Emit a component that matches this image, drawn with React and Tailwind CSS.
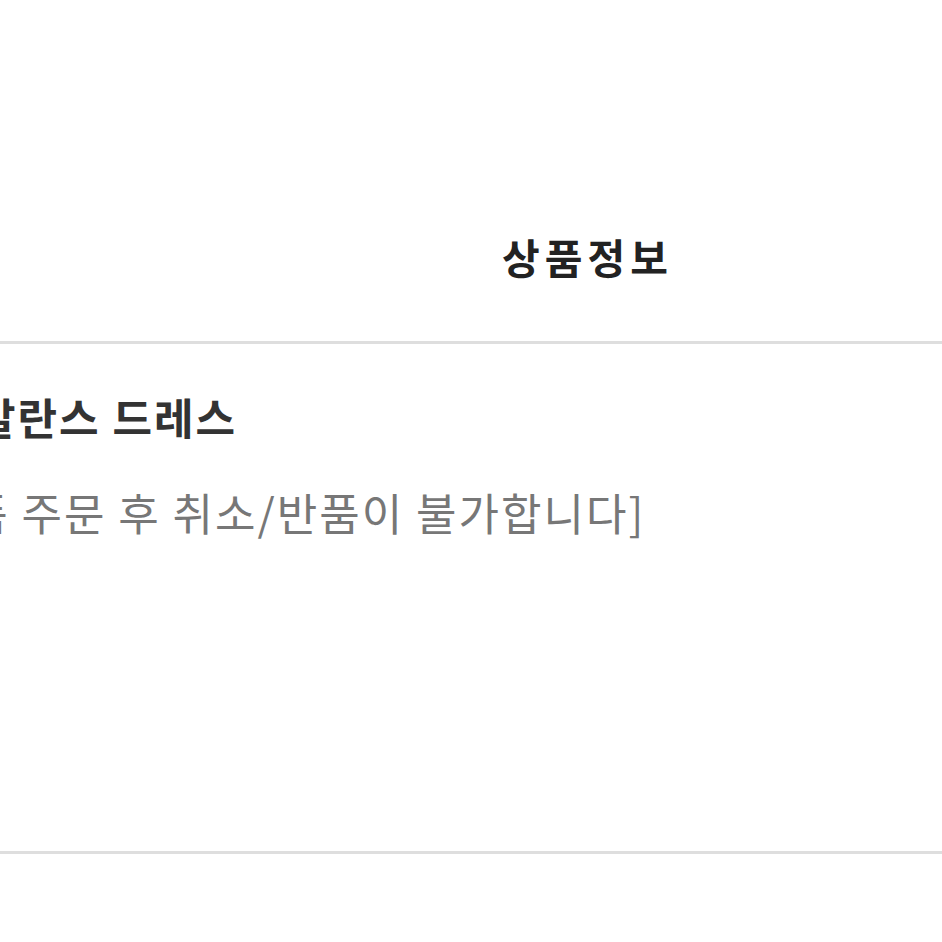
import React from 'react';

export default function App() {
    return (
        <div className="w-[942px] h-[942px] bg-white overflow-hidden" style={{ fontFamily: '"Noto Sans CJK KR", "Noto Sans", sans-serif' }}>
            <div className="h-[341px] flex items-start pt-[236px] pl-[502px]">
                <h2 className="text-[41px] leading-none font-bold text-[#222] tracking-[5px]">상품정보</h2>
            </div>
            <div className="h-[3px] bg-[#dedede]" />
            <div className="h-[507px] overflow-hidden pt-[51px]">
                <p className="text-[43px] leading-none font-bold text-[#333] tracking-[2px] whitespace-nowrap -ml-[24px]">
                    발란스 드레스
                </p>
                <p className="mt-[52px] text-[44px] leading-none text-[#777] tracking-[2px] whitespace-nowrap -ml-[274px]">
                    [해외배송 상품 주문 후 취소/반품이 불가합니다]
                </p>
            </div>
            <div className="h-[3px] bg-[#dedede]" />
        </div>
    );
}
